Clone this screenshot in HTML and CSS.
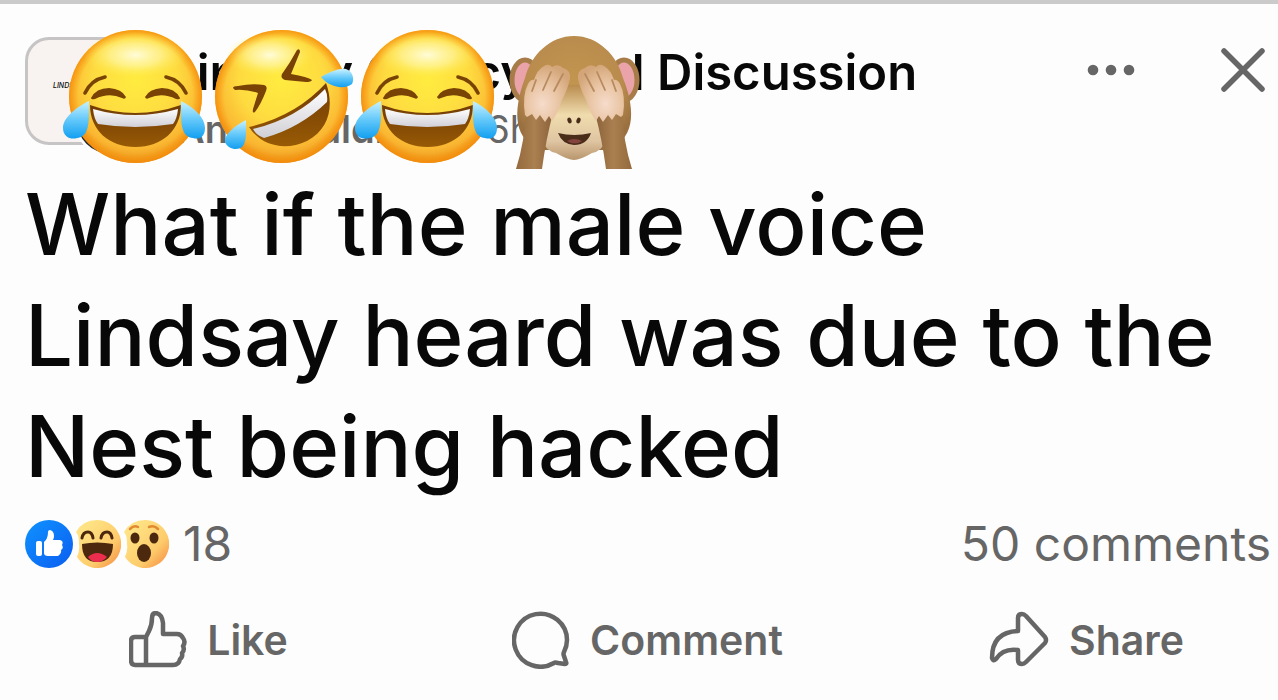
FILE: index.html
```html
<!DOCTYPE html>
<html lang="en">
<head>
    <meta charset="UTF-8">
    <meta name="viewport" content="width=device-width, initial-scale=1.0">
    <title>Discussion</title>
    <link rel="stylesheet" href="styles.css">
</head>
<body>
    <!-- shared gradients and the laughing face -->
    <svg class="defs" width="0" height="0" aria-hidden="true">
        <defs>
            <radialGradient id="face" cx="50%" cy="38%" r="64%">
                <stop offset="0" stop-color="#ffec40"/>
                <stop offset="0.5" stop-color="#fedb40"/>
                <stop offset="0.8" stop-color="#fab732"/>
                <stop offset="1" stop-color="#e88c14"/>
            </radialGradient>
            <radialGradient id="rim">
                <stop offset="0.86" stop-color="#f98f0a" stop-opacity="0"/>
                <stop offset="1" stop-color="#f58a08" stop-opacity="0.8"/>
            </radialGradient>
            <radialGradient id="shine">
                <stop offset="0" stop-color="#fffde0" stop-opacity="0.95"/>
                <stop offset="0.5" stop-color="#fff9b0" stop-opacity="0.6"/>
                <stop offset="1" stop-color="#fff04a" stop-opacity="0"/>
            </radialGradient>
            <linearGradient id="mouth" x1="0" y1="0" x2="0" y2="1">
                <stop offset="0" stop-color="#713b05"/>
                <stop offset="1" stop-color="#985a05"/>
            </linearGradient>
            <linearGradient id="teeth" x1="0" y1="0" x2="0" y2="1">
                <stop offset="0" stop-color="#ffffff"/>
                <stop offset="1" stop-color="#cfcfd6"/>
            </linearGradient>
            <linearGradient id="tear" x1="0" y1="0" x2="0" y2="1">
                <stop offset="0" stop-color="#c9f2ff"/>
                <stop offset="0.5" stop-color="#63c8fa"/>
                <stop offset="1" stop-color="#129ff0"/>
            </linearGradient>
            <radialGradient id="fur" cx="50%" cy="40%" r="60%">
                <stop offset="0" stop-color="#c2954f"/>
                <stop offset="0.7" stop-color="#b98c4e"/>
                <stop offset="1" stop-color="#9a7040"/>
            </radialGradient>
            <linearGradient id="muzzle" x1="0" y1="0" x2="0" y2="1">
                <stop offset="0" stop-color="#b98c4e"/>
                <stop offset="0.4" stop-color="#f0dcae"/>
                <stop offset="0.75" stop-color="#dfc5a2"/>
                <stop offset="1" stop-color="#b8966c"/>
            </linearGradient>
            <radialGradient id="hand" cx="40%" cy="68%" r="70%">
                <stop offset="0" stop-color="#f6dccb"/>
                <stop offset="0.5" stop-color="#e9c5a4"/>
                <stop offset="1" stop-color="#d3a578"/>
            </radialGradient>
            <linearGradient id="arm">
                <stop offset="0" stop-color="#94693c"/>
                <stop offset="0.5" stop-color="#ab8050"/>
                <stop offset="1" stop-color="#8a623a"/>
            </linearGradient>
            <linearGradient id="blue" x1="0" y1="0" x2="1" y2="1">
                <stop offset="0" stop-color="#0f93ff"/>
                <stop offset="1" stop-color="#0b5df0"/>
            </linearGradient>
            <linearGradient id="yellow" x1="0" y1="0" x2="1" y2="1">
                <stop offset="0.2" stop-color="#ffe283"/>
                <stop offset="0.65" stop-color="#fdcb6b"/>
                <stop offset="1" stop-color="#f5853c"/>
            </linearGradient>
            <symbol id="joy" viewBox="0 0 146 144">
                <circle cx="73.5" cy="67.5" r="66.5" fill="url(#face)"/>
                <circle cx="73.5" cy="67.5" r="66.5" fill="url(#rim)"/>
                <ellipse cx="73.5" cy="26" rx="52" ry="23" fill="url(#shine)"/>
                <g fill="none" stroke="#7a4306" stroke-width="3.6" stroke-linecap="round">
                    <path d="M23 64Q29 51 43 48"/>
                    <path d="M124 64Q118 51 104 48"/>
                </g>
                <g fill="#7a4306">
                    <path d="M29 69Q34 59 47 59Q60 60 64 68Q63 71 60 69Q47 63 33 70Q29 71 29 69Z"/>
                    <path d="M118 69Q113 59 100 59Q87 60 83 68Q84 71 87 69Q100 63 114 70Q118 71 118 69Z"/>
                </g>
                <path d="M28 76Q73 92 119 76C119 101 100 118 73.5 118C47 118 28 101 28 76Z" fill="url(#mouth)"/>
                <path d="M31 80Q73 92 116 80Q115 90 111 95Q73 101 36 95Q32 90 31 80Z" fill="url(#teeth)"/>
                <path d="M27 72C13 79 1 89 1 99C1 108 9 111 15 109C25 108 28 99 27 72Z" fill="url(#tear)"/>
                <path d="M119 72C133 79 143 89 143 99C143 108 137 111 131 109C121 108 118 99 119 72Z" fill="url(#tear)"/>
            </symbol>
        </defs>
    </svg>

    <article class="post">
        <header class="post-header">
            <div class="avatar">
                <span class="avatar-text">LINDSAY</span>
                <span class="avatar-badge"></span>
            </div>
            <div class="heading">
                <h1 class="group-name">Lindsay Clancy Trial Discussion</h1>
                <p class="byline"><strong class="author">Anna Waldman</strong> <span>·</span> <span>6h</span></p>
            </div>
            <button class="icon-button more" aria-label="More options">
                <svg width="48" height="12" viewBox="0 0 48 12" fill="#666">
                    <circle cx="6" cy="6" r="5.3"/>
                    <circle cx="24" cy="6" r="5.3"/>
                    <circle cx="42" cy="6" r="5.3"/>
                </svg>
            </button>
            <button class="icon-button" aria-label="Close">
                <svg width="46" height="46" viewBox="0 0 46 46" stroke="#666" stroke-width="5.5" stroke-linecap="round">
                    <path d="M4 4L42 42M42 4L4 42"/>
                </svg>
            </button>
            <div class="stickers">
                <svg width="146" height="144"><use href="#joy"/></svg>
                <svg width="146" height="144" viewBox="0 0 146 144">
                    <circle cx="73.5" cy="67.5" r="66.5" fill="url(#face)"/>
                    <circle cx="73.5" cy="67.5" r="66.5" fill="url(#rim)"/>
                    <ellipse cx="62" cy="26" rx="44" ry="22" fill="url(#shine)"/>
                    <g fill="#7a4306">
                        <path d="M89 21Q92 19 92 23L83 45Q100 48 104 51Q103 53 98 53L77 51Q72 49 74 45Q82 34 89 21Z"/>
                        <path d="M25 59Q25 57 30 57Q44 54 56 56Q60 57 58 62Q53 75 47 83Q44 85 45 80L50 64Q38 60 27 61Z"/>
                    </g>
                    <path d="M41 98Q88 87 118 54C126 76 122 100 99 112C78 122 54 118 41 98Z" fill="url(#mouth)"/>
                    <path d="M45 100Q88 90 117 60Q120 66 119 73Q92 99 56 109Q48 106 45 100Z" fill="url(#teeth)"/>
                    <path d="M113 48C123 42 132 39 138 40C146 43 146 51 144 55C138 60 123 60 113 48Z" fill="url(#tear)"/>
                    <path d="M38 91C26 97 16 106 17 113C20 121 31 122 35 117C39 111 38 100 38 91Z" fill="url(#tear)"/>
                </svg>
                <svg width="146" height="144"><use href="#joy"/></svg>
                <svg width="146" height="144" viewBox="0 0 146 144">
                    <g fill="#eba3aa" stroke="#a77c48" stroke-width="5">
                        <ellipse cx="25" cy="51" rx="13" ry="20"/>
                        <ellipse cx="124" cy="51" rx="13" ry="20"/>
                    </g>
                    <path d="M74 7C98 7 117 26 123 49C137 84 134 112 106 121H42C14 112 12 84 25 49C31 26 50 7 74 7Z" fill="url(#fur)"/>
                    <path d="M67 56H81L103 88Q112 120 92 124Q80 131 74 131Q68 131 56 124Q36 120 45 88Z" fill="url(#muzzle)"/>
                    <g fill="#4a2c1a">
                        <ellipse cx="69.5" cy="91.5" rx="2" ry="3" transform="rotate(-20 69.5 91.5)"/>
                        <ellipse cx="78.500" cy="91.500" rx="2" ry="3" transform="rotate(20 78.5 91.5)"/>
                        <path d="M58 104Q74 108 91 104Q87 116 74 116Q62 115 58 104Z"/>
                    </g>
                    <path d="M67 112Q74 108 82 112Q75 117 67 112Z" fill="#84433c"/>
                    <g id="palm">
                        <path d="M26 80L53 84Q46 110 42 140H16Q25 112 26 80Z" fill="url(#arm)"/>
                        <path d="M25 86Q22 66 28 55Q31 50 34 51Q37 41 44 37Q49 34 52 38Q58 34 63 39Q71 41 70 50Q67 62 62 71Q58 84 52 92L49 87L45 93L40 86L36 91L32 85L27 88Z" fill="url(#hand)"/>
                        <path d="M32 62L36 51M43 61L51 43M54 62L63 45" fill="none" stroke="#b88a60" stroke-width="1.8" stroke-linecap="round"/>
                    </g>
                    <use href="#palm" transform="translate(148 0) scale(-1 1)"/>
                </svg>
            </div>
        </header>

        <p class="post-text">What if the male voice Lindsay heard was due to the Nest being hacked</p>

        <div class="stats">
            <svg width="48" height="48" viewBox="0 0 48 48" role="img" aria-label="Like">
                <circle cx="24" cy="24" r="24" fill="url(#blue)"/>
                <rect x="11" y="21" width="6" height="15" rx="2" fill="#fff"/>
                <path d="M19 22Q23 19 23 12Q23 10 25 10Q29 11 29 16Q29 18 28 20H35Q39 21 37 25Q39 28 36 30Q37 33 33 36H23Q19 36 19 33Z" fill="#fff"/>
            </svg>
            <svg width="48" height="48" viewBox="0 0 48 48" role="img" aria-label="Haha">
                <path d="M24 0A24 24 0 1 1 4 37Q7 31 6 24Q6 15 3 12Q10 0 24 0Z" fill="url(#yellow)"/>
                <path d="M9 18Q10 12 15 12Q19 12 20 18M28 18Q29 12 34 12Q38 12 39 18" fill="none" stroke="#4b280e" stroke-width="3" stroke-linecap="round"/>
                <path d="M9 24Q24 21 40 24Q40 42 24 42Q9 42 9 24Z" fill="#4b280e"/>
                <path d="M15 37Q24 29 34 37Q30 42 24 42Q18 42 15 37Z" fill="#ec2d4d"/>
            </svg>
            <svg width="48" height="48" viewBox="0 0 48 48" role="img" aria-label="Wow">
                <path d="M24 0A24 24 0 1 1 4 37Q7 31 6 24Q6 15 3 12Q10 0 24 0Z" fill="url(#yellow)"/>
                <path d="M9 9Q13 5 17 7M28 7Q33 5 37 9" fill="none" stroke="#e28a32" stroke-width="2.5" stroke-linecap="round"/>
                <g fill="#4b280e">
                    <ellipse cx="14" cy="18" rx="4.5" ry="5.5"/>
                    <ellipse cx="33" cy="18" rx="4.5" ry="5.5"/>
                    <ellipse cx="23" cy="33" rx="7" ry="9"/>
                </g>
            </svg>
            <span class="reaction-count">18</span>
            <a class="comment-count" href="#">50 comments</a>
        </div>

        <div class="actions">
            <button class="action">
                <svg width="58" height="58" viewBox="0 0 58 58">
                    <path d="M17 26H6Q2 26 2 30V49Q2 54 6 54H44Q50 54 51 48Q54 46 53 42Q56 39 54 35Q57 31 54 27Q52 23 48 23H34V12Q33 3 27 2Q23 2 23 7Q23 14 20 20L17 26V54"/>
                </svg>
                Like
            </button>
            <button class="action">
                <svg width="58" height="58" viewBox="0 0 58 58">
                    <path d="M55 29A26.5 26.5 0 1 0 42 52Q43 51 46 52L53 53Q55 53 54 51L52 45Q51 43 52 41Q55 35 55 29Z"/>
                </svg>
                Comment
            </button>
            <button class="action">
                <svg width="60" height="58" viewBox="0 0 60 58">
                    <path d="M29 20V7Q29 3 33 3Q35 3 37 5L56 26Q58 29 56 32L37 51Q35 53 33 53Q29 53 29 49V39Q14 37 7 48Q4 51 3 47Q3 21 29 20Z"/>
                </svg>
                Share
            </button>
        </div>
    </article>
</body>
</html>
```
FILE: styles.css
```css
body {
    margin: 0;
    background-color: #fdfdfd;
    color: #080809;
    font-family: Inter, "Liberation Sans", sans-serif;
}
.defs {
    position: absolute;
}
.post {
    overflow: hidden;
    border-top: 4px solid #cbcbcb;
}
.post-header {
    position: relative;
    display: flex;
    align-items: flex-start;
    padding: 33px 12px 0 25px;
}
.avatar {
    position: relative;
    display: flex;
    align-items: center;
    box-sizing: border-box;
    width: 108px;
    height: 108px;
    padding-left: 25px;
    border: 3px solid #c6c4c4;
    border-radius: 24px;
    background-color: #f8f3f0;
}
.avatar-text {
    padding-bottom: 12px;
    font-size: 7px;
    font-style: italic;
    font-weight: 500;
}
.avatar-badge {
    position: absolute;
    right: -14px;
    bottom: -14px;
    width: 64px;
    height: 64px;
    border: 3px solid #fdfdfd;
    border-radius: 50%;
    background-color: #26282e;
}
.heading {
    flex: 1;
    padding: 12px 0 0 36px;
    white-space: nowrap;
}
.group-name {
    margin: 0;
    font-size: 49px;
    line-height: 48px;
    font-weight: 600;
}
.byline {
    margin: 8px 0 0 8px;
    color: #666;
    font-size: 38px;
    line-height: 48px;
}
.author {
    font-weight: 600;
}
.icon-button {
    display: flex;
    align-items: center;
    height: 66px;
    padding: 0;
    border: none;
    background: none;
    cursor: pointer;
}
.more {
    margin-right: 85px;
}
.stickers {
    position: absolute;
    top: 25px;
    left: 62px;
    display: flex;
}
.post-text {
    margin: 0;
    padding: 16px 25px 0;
    font-size: 85px;
    line-height: 111px;
    font-weight: 500;
}
.stats {
    display: flex;
    align-items: center;
    padding: 14px 7px 0 25px;
    color: #666;
    font-size: 48px;
    line-height: 56px;
}
.reaction-count {
    margin-left: 14px;
}
.comment-count {
    margin-left: auto;
    color: inherit;
    text-decoration: none;
}
/* the row runs past both edges of the post */
.actions {
    display: grid;
    grid-template-columns: repeat(3, 1fr);
    justify-items: center;
    margin: 0 -28px 0 -11px;
    padding-top: 39px;
}
.action {
    display: flex;
    align-items: center;
    gap: 20px;
    padding: 0;
    border: none;
    background: none;
    color: #666;
    font-family: inherit;
    font-size: 41px;
    font-weight: 600;
    cursor: pointer;
}
.action svg {
    fill: none;
    stroke: #666;
    stroke-width: 4.5;
    stroke-linejoin: round;
}
```
